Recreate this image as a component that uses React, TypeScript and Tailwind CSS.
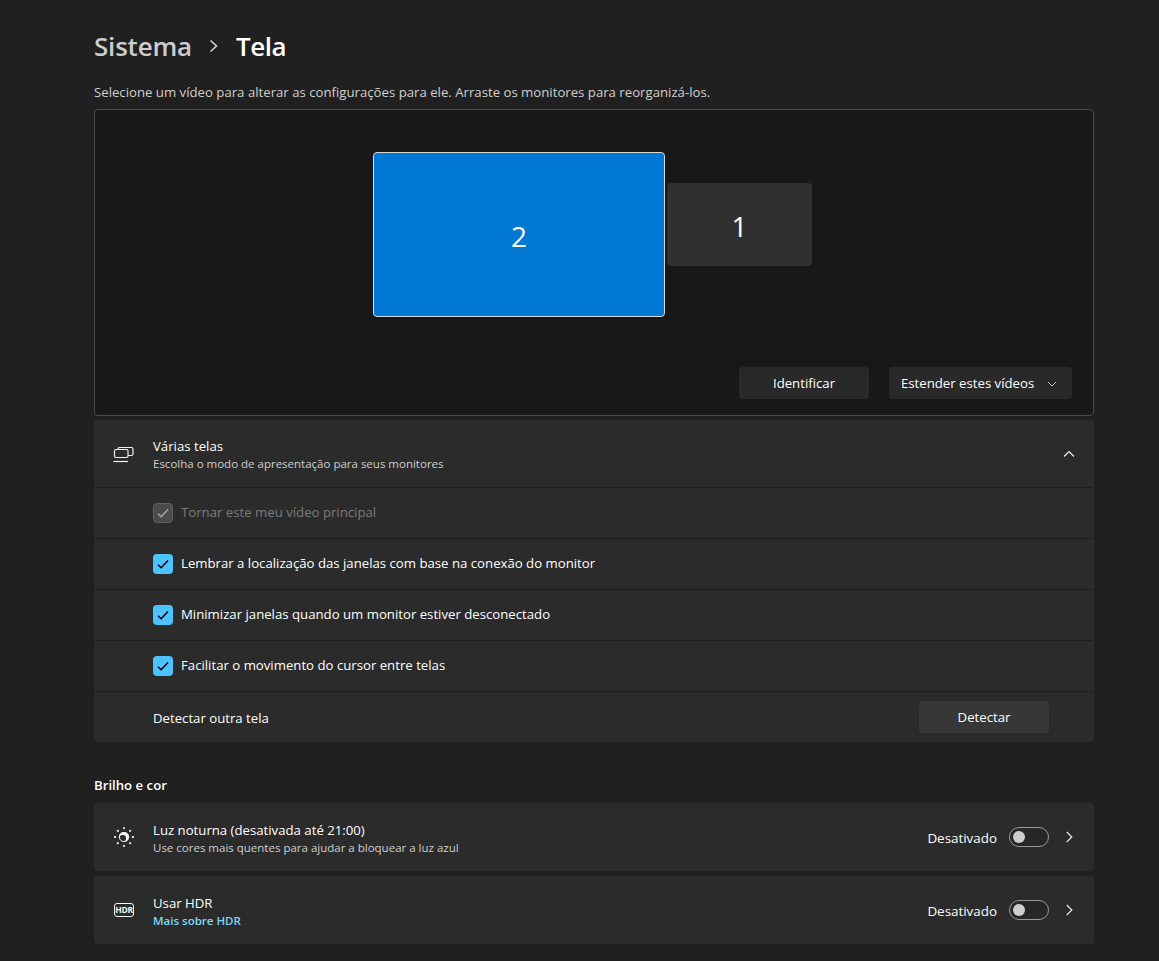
import type { ReactNode } from "react";

const font = { fontFamily: '"Open Sans", "Noto Sans", sans-serif' };

function Check({ disabled }: { disabled?: boolean }) {
  return (
    <span
      className={`flex h-5 w-5 shrink-0 items-center justify-center rounded-[4px] ${
        disabled ? "border border-[#5f5f5f] bg-[#4b4b4b]" : "bg-[#4cc2ff]"
      }`}
    >
      <svg width="12" height="12" viewBox="0 0 12 12" fill="none" stroke={disabled ? "#a5a5a5" : "#000000"} strokeWidth="1.500">
        <path d="M1 6.800 4.200 9.800 11 2.500" />
      </svg>
    </span>
  );
}

function CheckRow({ label, disabled }: { label: string; disabled?: boolean }) {
  return (
    <div className="flex h-[51px] items-center gap-2 border-t border-[#1d1d1d] pb-[1px] pl-[58px]">
      <Check disabled={disabled} />
      <span className={`text-[13.2px] ${disabled ? "text-[#7b7b7b]" : "text-white"}`}>{label}</span>
    </div>
  );
}

function Toggle() {
  return (
    <span className="flex h-5 w-10 items-center rounded-full border border-[#9a9a9a] bg-[#272727] pl-[3px]">
      <span className="h-3 w-3 rounded-full bg-[#cecece]" />
    </span>
  );
}

function Chevron() {
  return (
    <svg width="12" height="12" viewBox="0 0 12 12" fill="none" stroke="#e8e8e8" strokeWidth="1.200">
      <path d="M3.800 1 8.800 6 3.800 11" />
    </svg>
  );
}

function SettingRow({ icon, title, children }: { icon: ReactNode; title: string; children: ReactNode }) {
  return (
    <div className="flex h-[68px] items-center rounded-[4px] bg-[#2b2b2b] pl-[18px] pr-[19px]">
      <span className="flex w-6 justify-center">{icon}</span>
      <div className="ml-[17px] flex-1 pt-[3px]">
        <div className="text-[13.2px] leading-[18px] text-white">{title}</div>
        {children}
      </div>
      <span className="mr-3 pt-[3px] text-[13.400px] text-white">Desativado</span>
      <Toggle />
      <span className="ml-[14px] flex w-3">
        <Chevron />
      </span>
    </div>
  );
}

export default function App() {
  return (
    <div className="h-[961px] overflow-hidden bg-[#202020] pl-[94px] pr-[65px]" style={font}>
      <h1 className="flex h-[84px] items-center pt-2 text-[26px] font-semibold">
        <span className="tracking-[-0.2px] text-[#cdcdcd]">Sistema</span>
        <svg className="mx-[17px]" width="10" height="14" viewBox="0 0 10 14" fill="none" stroke="#d0d0d0" strokeWidth="1.600">
          <path d="M1.500 1.500 7.500 7 1.500 12.500" />
        </svg>
        <span className="tracking-[-0.5px] text-white">Tela</span>
      </h1>
      <p className="h-[17px] text-[13.2px] leading-[17px] text-[#cfcfcf]">
        Selecione um vídeo para alterar as configurações para ele. Arraste os monitores para reorganizá-los.
      </p>

      <div className="relative mt-2 h-[307px] rounded-[4px] border border-[#4a4a4a] bg-[#181818]">
        <div className="absolute left-[278px] top-[42px] flex h-[165px] w-[292px] items-center justify-center rounded-[4px] border border-[#d8d8d8] bg-[#0078d4] pt-[2px] text-[28px] text-white">
          2
        </div>
        <div className="absolute left-[572px] top-[73px] flex h-[83px] w-[145px] items-center justify-center rounded-[4px] bg-[#303030] pt-[2px] text-[28px] text-white">
          1
        </div>
        <div className="flex h-full items-end justify-end gap-5 pb-4 pr-[21px]">
          <button className="h-8 w-[130px] rounded-[4px] bg-[#292929] pt-[2px] text-[13.2px] text-white">Identificar</button>
          <button className="flex h-8 w-[183px] items-center justify-between rounded-[4px] bg-[#292929] pl-3 pr-[15px] pt-[2px] text-[13.2px] text-white">
            Estender estes vídeos
            <svg width="10" height="10" viewBox="0 0 10 10" fill="none" stroke="#bdbdbd" strokeWidth="1">
              <path d="M1 3 5 7 9 3" />
            </svg>
          </button>
        </div>
      </div>

      <div className="mt-1 h-[322px] rounded-[4px] bg-[#2b2b2b] px-[1px] py-[1px]">
        <div className="flex h-[66px] items-center pl-[17px] pr-[17px]">
          <svg width="24" height="24" viewBox="0 0 24 24" fill="none" stroke="#f0f0f0" strokeWidth="1.200">
            <rect x="2.500" y="7.500" width="13.500" height="8" rx="1.500" />
            <path d="M6 7.500V7A1.500 1.500 0 0 1 7.500 5.500H19.500A1.500 1.500 0 0 1 21 7V12A1.500 1.500 0 0 1 19.500 13.500H16" />
            <path d="M1.500 19.500H16" />
          </svg>
          <div className="ml-[17px] flex-1 pt-[2px]">
            <div className="text-[13.2px] leading-[18px] text-white">Várias telas</div>
            <div className="text-[11.500px] leading-[18px] text-[#cfcfcf]">Escolha o modo de apresentação para seus monitores</div>
          </div>
          <svg className="mr-[1px]" width="12" height="12" viewBox="0 0 12 12" fill="none" stroke="#f0f0f0" strokeWidth="1.200">
            <path d="M1 8.500 6 3.500 11 8.500" />
          </svg>
        </div>
        <CheckRow label="Tornar este meu vídeo principal" disabled />
        <CheckRow label="Lembrar a localização das janelas com base na conexão do monitor" />
        <CheckRow label="Minimizar janelas quando um monitor estiver desconectado" />
        <CheckRow label="Facilitar o movimento do cursor entre telas" />
        <div className="flex h-[51px] items-center justify-between border-t border-[#1d1d1d] pl-[58px] pr-11">
          <span className="pt-[3px] text-[13.2px] text-white">Detectar outra tela</span>
          <button className="h-8 w-[130px] rounded-[4px] bg-[#373737] pt-[1px] text-[13.2px] text-white">Detectar</button>
        </div>
      </div>

      <h2 className="flex h-[61px] items-end pb-[7px] text-[13.2px] font-semibold text-white">Brilho e cor</h2>

      <div className="flex flex-col gap-[5px]">
        <SettingRow
          title="Luz noturna (desativada até 21:00)"
          icon={
            <svg width="22" height="22" viewBox="0 0 22 22" fill="none" stroke="#f4f4f4" strokeWidth="1.800" strokeLinecap="round">
              <circle cx="11" cy="11" r="5" fill="#f4f4f4" stroke="none" />
              <circle cx="9.700" cy="12.300" r="3.300" fill="#2b2b2b" stroke="none" />
              <circle cx="11" cy="11" r="4.600" strokeWidth="1" />
              <path d="M11 1.800V2.300M11 19.700V20.200M1.800 11H2.300M19.700 11H20.200M4.600 4.600 5 5M17.400 4.600 17 5M4.600 17.400 5 17M17.400 17.400 17 17" />
            </svg>
          }
        >
          <div className="text-[11.500px] leading-[18px] text-[#cfcfcf]">Use cores mais quentes para ajudar a bloquear a luz azul</div>
        </SettingRow>
        <SettingRow
          title="Usar HDR"
          icon={
            <span className="flex h-[14px] w-5 items-center justify-center rounded-[3px] border-[1.5px] border-[#f4f4f4] text-[8.500px] font-bold leading-none tracking-[-0.3px] text-[#f4f4f4]">
              HDR
            </span>
          }
        >
          <div className="text-[11.500px] font-semibold leading-[18px] text-[#7fd8f5]">Mais sobre HDR</div>
        </SettingRow>
      </div>
    </div>
  );
}
